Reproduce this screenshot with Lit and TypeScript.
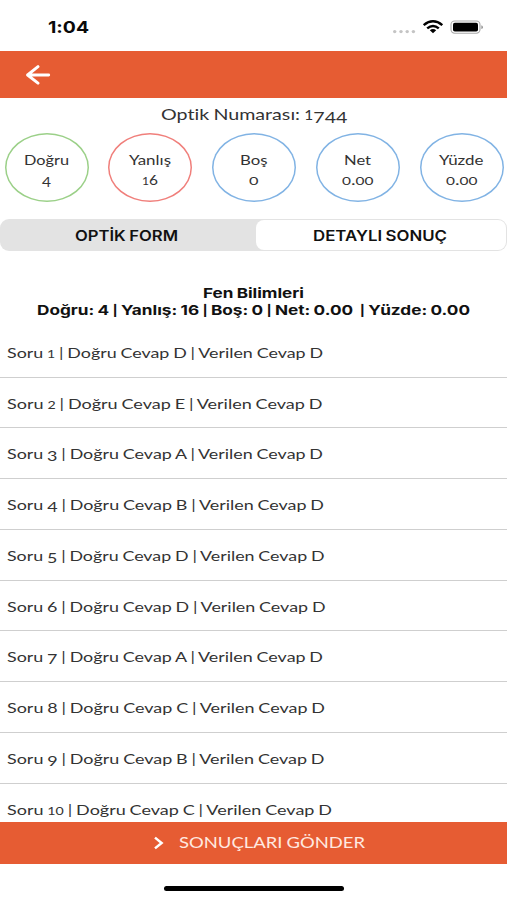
import { LitElement, html, css, svg } from "lit";
import { customElement, property } from "lit/decorators.js";

// A single line of text stretched to an exact width. The baseline sits 15px
// below the top of a 20px high box.
@customElement("wide-text")
class WideText extends LitElement {
  @property() text = "";
  @property({ type: Number }) width = 100;
  @property({ type: Number }) size = 14;
  @property({ type: Boolean }) oldstyle = false;

  static styles = css`
    :host { display: block; flex: none; }
    svg { display: block; overflow: visible; }
    text { fill: currentColor; white-space: pre; font-variant-ligatures: none; word-spacing: -0.6px; }
  `;

  // Old-style figures: 0-2 at x-height, 3 4 5 7 9 hang below the baseline.
  // Separator bars are drawn a little shorter than the font's own.
  private runs() {
    let shift = 0;
    const runs = this.oldstyle
      ? this.text.match(/[012]+|[34579]+|[68]+|[^0-9]+/g)
      : this.text.match(/\||[^|]+/g);
    return (runs ?? []).map((run) => {
      const bar = run === "|";
      const low = bar ? -0.8 : this.oldstyle && /[34579]/.test(run) ? this.size * 0.16 : 0;
      const dy = low - shift;
      shift = low;
      const scale = bar ? 0.82 : this.oldstyle && /[012]/.test(run) ? 0.79 : 1;
      return svg`<tspan dy=${dy} font-size=${this.size * scale}>${run}</tspan>`;
    });
  }

  render() {
    return html`<svg width=${this.width} height="20">${svg`<text y="15" font-size=${this.size}
      textLength=${this.width} lengthAdjust="spacingAndGlyphs">${this.runs()}</text>`}</svg>`;
  }
}

const stats = [
  { label: "Doğru", lw: 45, value: "4", vw: 9, tone: "green" },
  { label: "Yanlış", lw: 42, value: "16", vw: 16, tone: "red" },
  { label: "Boş", lw: 27.5, value: "0", vw: 9.5, tone: "blue" },
  { label: "Net", lw: 27, value: "0.00", vw: 31.5, tone: "blue" },
  { label: "Yüzde", lw: 44.5, value: "0.00", vw: 31.5, tone: "blue" },
];

const answers: [string, number][] = [
  ["D", 316], ["E", 315.5], ["A", 316], ["B", 317], ["D", 317.5],
  ["D", 318.5], ["A", 316], ["C", 318], ["B", 317.5], ["C", 325],
];

@customElement("app-root")
class AppRoot extends LitElement {
  static styles = css`
    :host {
      display: flex;
      flex-direction: column;
      height: 900px;
      overflow: hidden;
      background: #fff;
      color: #333;
      font-family: Lato, "Open Sans", sans-serif;
    }
    .status {
      flex: none;
      height: 51px;
      box-sizing: border-box;
      padding: 18px 24px 0 48px;
      display: flex;
      justify-content: space-between;
      color: #0a0a0a;
      font-family: Inter, sans-serif;
      font-weight: 650;
    }
    .nav {
      flex: none;
      height: 46.7px;
      display: flex;
      align-items: center;
      padding-left: 25px;
      background: #e65c33;
    }
    .nav svg { display: block; margin-top: 2px; }
    .number { flex: none; height: 35px; box-sizing: border-box; padding: 7.5px 0 0 160.5px; }
    .stats { flex: none; display: flex; justify-content: space-between; padding: 0 3.5px 0 4.5px; }
    .stat {
      width: 84px;
      height: 69px;
      box-sizing: border-box;
      box-shadow: inset 0 0 0 1.5px var(--ring);
      border-radius: 50%;
      display: flex;
      flex-direction: column;
      align-items: center;
      padding-top: 17px;
    }
    .green { --ring: #9bd088; }
    .red { --ring: #f07f7b; }
    .blue { --ring: #81b3e4; }
    .tabs {
      flex: none;
      margin-top: 17.3px;
      height: 32px;
      box-sizing: border-box;
      padding: 1px 1.5px 1px 0;
      display: grid;
      grid-template-columns: 256px 1fr;
      background: #e3e3e3;
      border-radius: 9px;
      color: #111;
      font-family: Inter, sans-serif;
      font-weight: 600;
    }
    .tab { display: flex; justify-content: center; padding-top: 6.2px; border-radius: 8px; }
    .tab.off { padding-right: 3px; }
    .tab.on { background: #fff; padding-right: 1px; }
    .summary {
      flex: none;
      height: 75.8px;
      box-sizing: border-box;
      padding-top: 32.5px;
      display: flex;
      flex-direction: column;
      align-items: center;
      color: #111;
      font-family: Inter, sans-serif;
      font-weight: 650;
    }
    .summary wide-text + wide-text { margin-top: -3.4px; }
    .list { flex: 1; min-height: 0; overflow: hidden; }
    .row {
      height: 50.78px;
      box-sizing: border-box;
      padding: 16px 0 0 7px;
      border-bottom: 1px solid #cfcfcf;
    }
    .send {
      flex: none;
      height: 42px;
      box-sizing: border-box;
      padding: 0 0 0 153px;
      display: flex;
      align-items: center;
      gap: 14.5px;
      background: #e65c33;
      color: #ffe9e0;
    }
    .send wide-text { margin-top: 1.5px; }
    .home { flex: none; height: 36.5px; display: flex; justify-content: center; align-items: flex-start; }
    .home-bar { width: 180px; height: 5px; margin: 22.7px 0 0 1px; border-radius: 3px; background: #000; }
  `;

  render() {
    return html`
      <div class="status">
        <wide-text text="1:04" width="41" size="16.6"></wide-text>
        <svg width="91" height="20" viewBox="392 18 91 20">
          <g fill="#c4c4c4">
            <circle cx="394.7" cy="31.6" r="1.7" /><circle cx="401" cy="31.6" r="1.7" />
            <circle cx="407.2" cy="31.6" r="1.7" /><circle cx="413.4" cy="31.6" r="1.7" />
          </g>
          <g fill="none" stroke="#000" stroke-width="2.5">
            <path d="M423.7 25.1Q433 17.5 442.3 25.1" />
            <path d="M427.2 28.4Q433 23.5 438.8 28.4" />
          </g>
          <path d="M429.8 30.3Q433 27.9 436.2 30.3L433 33.2Z" />
          <rect x="451" y="21" width="29" height="12.2" rx="3.6" fill="#fff" stroke="#aaa" stroke-width="1.1" />
          <rect x="453" y="22.8" width="25" height="8.8" rx="1.8" />
          <path d="M481.3 25.3Q483 25.7 483 27.2T481.3 29.1Z" fill="#999" />
        </svg>
      </div>
      <div class="nav">
        <svg width="26" height="20" viewBox="0 0 26 20" fill="none" stroke="#fff" stroke-width="2.9"
          stroke-linecap="round" stroke-linejoin="round">
          <path d="M13 1.6L2.6 10L13 18.2M2.6 10H23.7" />
        </svg>
      </div>
      <div class="number">
        <wide-text oldstyle text="Optik Numarası: 1744" width="186.5" size="16"></wide-text>
      </div>
      <div class="stats">
        ${stats.map((s) => html`<div class="stat ${s.tone}">
          <wide-text text=${s.label} width=${s.lw} size="13.4"></wide-text>
          <wide-text oldstyle text=${s.value} width=${s.vw} size="13.6"></wide-text>
        </div>`)}
      </div>
      <div class="tabs">
        <div class="tab off"><wide-text text="OPTİK FORM" width="103" size="14.2"></wide-text></div>
        <div class="tab on"><wide-text text="DETAYLI SONUÇ" width="134" size="14.2"></wide-text></div>
      </div>
      <div class="summary">
        <wide-text text="Fen Bilimleri" width="101" size="13.4"></wide-text>
        <wide-text text="Doğru: 4 | Yanlış: 16 | Boş: 0 | Net: 0.00  | Yüzde: 0.00" width="433" size="13.4"></wide-text>
      </div>
      <div class="list">
        ${answers.map(([key, w], i) => html`<div class="row">
          <wide-text oldstyle text=${`Soru ${i + 1} | Doğru Cevap ${key} | Verilen Cevap D`} width=${w} size="14"></wide-text>
        </div>`)}
      </div>
      <div class="send">
        <svg width="11" height="14" viewBox="0 0 11 14" fill="none" stroke="#fff" stroke-width="2.5">
          <path d="M2 1.6L8.6 7L2 12.4" />
        </svg>
        <wide-text text="SONUÇLARI GÖNDER" width="186" size="15.4"></wide-text>
      </div>
      <div class="home"><div class="home-bar"></div></div>
    `;
  }
}
